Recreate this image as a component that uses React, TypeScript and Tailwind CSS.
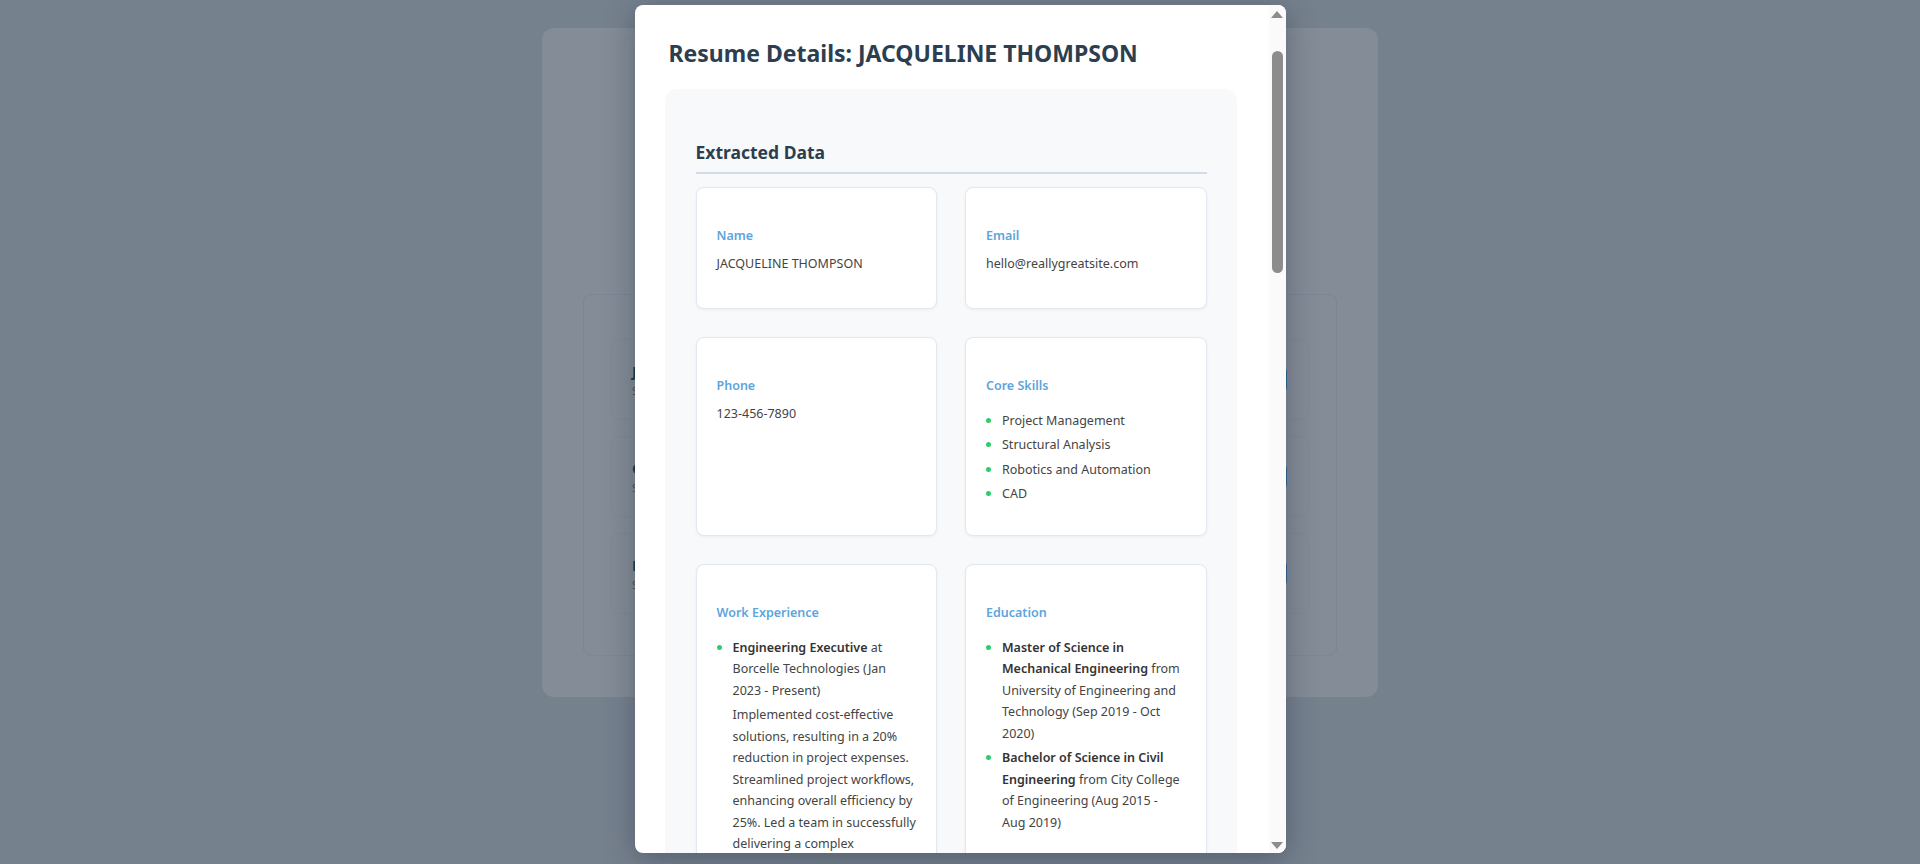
import type { ReactNode } from "react";

const font = "font-[family-name:'Noto_Sans','Open_Sans',sans-serif]";

function Dot() {
  return <span className="mt-[8px] mr-[11px] h-[5px] w-[5px] shrink-0 rounded-full bg-[#2ecc71]" />;
}

function Item({ children }: { children: ReactNode }) {
  return (
    <li className="flex items-start">
      <Dot />
      <div className="min-w-0 flex-1">{children}</div>
    </li>
  );
}

function List({ children }: { children: ReactNode }) {
  return <ul className="mt-[14px] mb-[-3px] space-y-[3px]">{children}</ul>;
}

function Card({ label, children }: { label: string; children: ReactNode }) {
  return (
    <div className="rounded-lg border border-[#e2e7f0] bg-white px-5 pt-[38px] pb-[33px] shadow-[0_1px_3px_rgba(30,50,90,0.06)]">
      <div className="mb-[7px] text-[12.5px] leading-5 font-semibold text-[#5da5dc]">{label}</div>
      {children}
    </div>
  );
}

function BackgroundPage() {
  const rows = ["JACQUELINE THOMPSON", "OLIVIA WILSON", "DANIEL GALLEGO"];
  return (
    <div className="mx-auto mt-[28px] h-[669px] w-[836px] rounded-xl bg-[#838c97] pt-[266px] pl-[41px]">
      <div className="h-[362px] w-[754px] rounded-lg border border-[#7b8795] px-[27px] pt-[44px]">
        <div className="flex flex-col gap-[16px]">
          {rows.map((r) => (
            <div
              key={r}
              className="flex h-[81px] items-center justify-between rounded-lg border border-[#7f8994] bg-[#838c97] pr-[21px] pl-[20px]"
            >
              <div>
                <div className="text-[15px] font-bold text-[#1f3a56]">{r}</div>
                <div className="text-[11px] text-[#4b5562]">Status: Processed</div>
              </div>
              <div className="h-[27px] w-[96px] rounded-md bg-[#2f6893]" />
            </div>
          ))}
        </div>
      </div>
    </div>
  );
}

function Scrollbar() {
  return (
    <div className="flex w-[17px] shrink-0 flex-col items-center bg-[#fafafa]">
      <div className="mt-[6px] h-0 w-0 border-x-[6px] border-b-[7px] border-x-transparent border-b-[#8c8c8c]" />
      <div className="mt-[33px] h-[222px] w-[11px] rounded-full bg-[#8c8c8c]" />
      <div className="flex-1" />
      <div className="mb-[4px] h-0 w-0 border-x-[6px] border-t-[7px] border-x-transparent border-t-[#8c8c8c]" />
    </div>
  );
}

export default function App() {
  return (
    <div className={`relative h-[864px] w-full overflow-hidden bg-[#76818e] ${font}`}>
      <BackgroundPage />

      <div className="absolute inset-0 flex justify-center pt-[5px]">
        <div className="flex h-[848px] w-[651px] overflow-hidden rounded-lg bg-white shadow-[0_6px_30px_rgba(20,30,45,0.35)]">
          <div className="min-w-0 flex-1 overflow-hidden pt-[33px] pr-[32px] pl-[30px]">
            <h2 className="mb-[21px] pl-[4px] text-[23px] leading-[30px] font-bold text-[#2c3e50]">
              Resume Details: JACQUELINE THOMPSON
            </h2>

            <div className="rounded-xl bg-[#f8f9fb] pt-[50px] pr-[30px] pb-8 pl-[31px]">
              <h3 className="mb-[13px] border-b-2 border-[#d3dbe8] pb-[7px] text-[17.5px] leading-[26px] font-bold text-[#2c3e50]">
                Extracted Data
              </h3>

              <div className="grid grid-cols-2 gap-[28px] text-[12.5px] leading-[21.5px] text-[#444]">
                <Card label="Name">
                  <div>JACQUELINE THOMPSON</div>
                </Card>
                <Card label="Email">
                  <div>hello@reallygreatsite.com</div>
                </Card>

                <Card label="Phone">
                  <div>123-456-7890</div>
                </Card>
                <Card label="Core Skills">
                  <List>
                    <Item>Project Management</Item>
                    <Item>Structural Analysis</Item>
                    <Item>Robotics and Automation</Item>
                    <Item>CAD</Item>
                  </List>
                </Card>

                <Card label="Work Experience">
                  <List>
                    <Item>
                      <strong className="font-semibold text-[#333]">Engineering Executive</strong> at Borcelle
                      Technologies (Jan 2023 - Present)
                      <div className="mt-[3px]">
                        Implemented cost-effective solutions, resulting in a 20% reduction in project expenses.
                        Streamlined project workflows, enhancing overall efficiency by 25%. Led a team in
                        successfully delivering a complex engineering project on time and within budget.
                      </div>
                    </Item>
                    <Item>
                      <strong className="font-semibold text-[#333]">Project Engineer</strong> at Salford &amp; Co.
                      (Mar 2021 - Dec 2022)
                    </Item>
                  </List>
                </Card>
                <Card label="Education">
                  <List>
                    <Item>
                      <strong className="font-semibold text-[#333]">Master of Science in Mechanical Engineering</strong>{" "}
                      from University of Engineering and Technology (Sep 2019 - Oct 2020)
                    </Item>
                    <Item>
                      <strong className="font-semibold text-[#333]">Bachelor of Science in Civil Engineering</strong>{" "}
                      from City College of Engineering (Aug 2015 - Aug&nbsp;2019)
                    </Item>
                  </List>
                </Card>
              </div>
            </div>
          </div>
          <Scrollbar />
        </div>
      </div>
    </div>
  );
}
